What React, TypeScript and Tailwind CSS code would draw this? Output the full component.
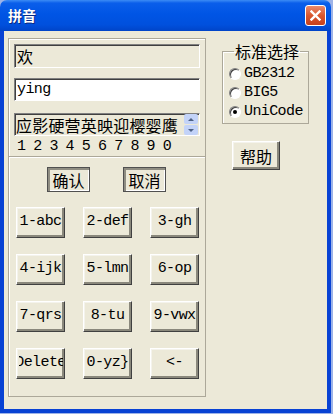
import type { ReactNode } from "react"

const KEYS = [
  ["1-abc", "2-def", "3-gh"],
  ["4-ijk", "5-lmn", "6-op"],
  ["7-qrs", "8-tu", "9-vwx"],
  ["Delete", "0-yz}", "<-"],
]

const CANDIDATES = "应影硬营英映迎樱婴鹰"

const mono = "font-['Liberation_Mono','Noto_Sans_CJK_SC',monospace] text-[15px] tracking-[-0.6px]"
const cjk = "font-['Noto_Sans_CJK_SC',sans-serif]"

function KeyButton({ label }: { label: string }) {
  return (
    <button
      type="button"
      className={`flex h-[31px] w-[49px] items-center justify-center border border-[#ffffff_#404040_#404040_#ffffff] bg-[#ece9d8] text-black shadow-[inset_-2px_-2px_0_#8a887c,inset_1px_1px_0_#f4f3ec] ${mono}`}
    >
      <span className="flex w-[44px] justify-center overflow-hidden whitespace-nowrap">{label}</span>
    </button>
  )
}

function FrameButton({ children }: { children: ReactNode }) {
  return (
    <button
      type="button"
      className={`flex h-[25px] w-[43px] items-center justify-center border border-[#505050] bg-[#ece9d8] text-[16px] leading-none text-black shadow-[inset_2px_2px_0_#8f8d82,inset_-1px_-1px_0_#ffffff] ${cjk}`}
    >
      {children}
    </button>
  )
}

function Radio({ label, checked }: { label: string; checked?: boolean }) {
  return (
    <div className="flex h-[19px] items-center gap-[3px]">
      <span className="flex h-[12px] w-[12px] items-center justify-center rounded-full border border-[#808080_#ffffff_#ffffff_#808080] bg-white shadow-[inset_1px_1px_0_#404040]">
        {checked ? <span className="h-[4px] w-[4px] rounded-full bg-black" /> : null}
      </span>
      <span className={`leading-none text-black ${mono}`}>{label}</span>
    </div>
  )
}

export default function App() {
  return (
    <div className="h-[414px] w-[333px] bg-[#9db3e8]">
      <div className="flex h-[413px] w-[331px] flex-col">
        {/* title bar */}
        <div className="flex h-[31px] items-center justify-between rounded-t-[7px] bg-[linear-gradient(180deg,#3c8cf5_0%,#0a5eea_10%,#0055e5_45%,#0050dd_80%,#0044c8_100%)] pl-[8px] pr-[5px]">
          <span className={`text-[14px] font-bold text-white ${cjk} [text-shadow:1px_1px_0_#0a2a80]`}>拼音</span>
          <span className="flex h-[21px] w-[21px] items-center justify-center rounded-[3px] border border-white bg-[linear-gradient(180deg,#e98a6c_0%,#d9572f_50%,#c5401d_100%)]">
            <svg width="11" height="11" viewBox="0 0 11 11">
              <path d="M1.5 1.5 L9.5 9.5 M9.5 1.5 L1.5 9.5" stroke="white" strokeWidth="2.4" strokeLinecap="square" />
            </svg>
          </span>
        </div>

        {/* body */}
        <div className="flex flex-1 border-x-4 border-b-4 border-[#0842d4] bg-[#ece9d8] pl-[4px] pt-[7px]">
          {/* left group */}
          <div className="flex h-[359px] w-[198px] flex-col border border-[#aca899] shadow-[inset_1px_1px_0_#ffffff]">
            <div className="flex flex-col px-[5px] pt-[5px]">
              <div className={`flex h-[24px] items-center border border-[#808080_#ffffff_#ffffff_#808080] bg-[#ece9d8] pl-[2px] text-[16px] leading-none text-black shadow-[inset_1px_1px_0_#404040] ${cjk}`}>
                欢
              </div>
              <div className={`mt-[10px] flex h-[23px] items-center border border-[#808080_#ffffff_#ffffff_#808080] bg-white pl-[2px] leading-none text-black shadow-[inset_1px_1px_0_#404040] ${mono}`}>
                ying
              </div>
              <div className="mt-[12px] flex h-[23px] items-center border border-[#808080_#ffffff_#ffffff_#808080] bg-[#ece9d8] pl-[1px] pr-[1px] shadow-[inset_1px_1px_0_#404040]">
                <span className={`flex-1 text-[16px] leading-none tracking-[0.2px] text-black ${cjk}`}>{CANDIDATES}</span>
                <div className="flex h-[21px] w-[14px] flex-col gap-px">
                  <span className="flex flex-1 items-center justify-center rounded-[2px] bg-[#c3d3f8]">
                    <svg width="6" height="3" viewBox="0 0 6 3"><path d="M0 3 L3 0 L6 3 Z" fill="#4d6185" /></svg>
                  </span>
                  <span className="flex flex-1 items-center justify-center rounded-[2px] bg-[#c3d3f8]">
                    <svg width="6" height="3" viewBox="0 0 6 3"><path d="M0 0 L3 3 L6 0 Z" fill="#4d6185" /></svg>
                  </span>
                </div>
              </div>
              <div className={`flex h-[20px] items-center pl-[3px] leading-none text-black ${mono} tracking-[-0.9px]`}>
                1 2 3 4 5 6 7 8 9 0
              </div>
            </div>
            <div className="h-[2px] border-t border-b border-t-[#aca899] border-b-white" />

            <div className="mt-[9px] flex gap-[33px] pl-[38px]">
              <FrameButton>确认</FrameButton>
              <FrameButton>取消</FrameButton>
            </div>

            <div className="mt-[15px] flex flex-col gap-[16px] pl-[7px]">
              {KEYS.map((row, i) => (
                <div key={i} className="flex gap-[18px]">
                  {row.map((k) => (
                    <KeyButton key={k} label={k} />
                  ))}
                </div>
              ))}
            </div>
          </div>

          {/* right column */}
          <div className="ml-[16px] mt-[5px] flex flex-col">
            <fieldset className="w-[87px] border border-[#aca899] pb-[2px] pl-[6px] shadow-[inset_1px_1px_0_#ffffff]">
              <legend className={`ml-[5px] px-px text-[16px] leading-[16px] text-black ${cjk}`}>标准选择</legend>
              <div className="mt-[5px] flex flex-col">
                <Radio label="GB2312" />
                <Radio label="BIG5" />
                <Radio label="UniCode" checked />
              </div>
            </fieldset>
            <div className="ml-[10px] mt-[17px]">
              <button
                type="button"
                className={`flex h-[29px] w-[48px] items-center justify-center border border-[#ffffff_#404040_#404040_#ffffff] bg-[#ece9d8] text-[16px] leading-none text-black shadow-[inset_-2px_-2px_0_#8a887c,inset_1px_1px_0_#f4f3ec] ${cjk}`}
              >
                帮助
              </button>
            </div>
          </div>
        </div>
      </div>
    </div>
  )
}
